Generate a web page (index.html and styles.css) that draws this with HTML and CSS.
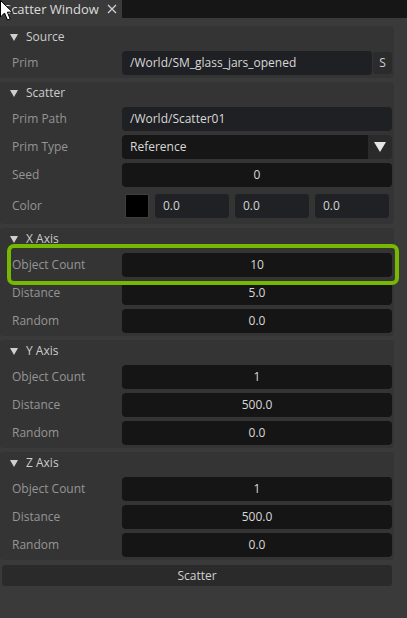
FILE: index.html
```html
<!DOCTYPE html>
<html>
<head>
<meta charset="utf-8">
<link rel="stylesheet" href="styles.css">
</head>
<body>
<div class="window">
  <div class="tabbar">
    <div class="tab">
      <span class="tab-title">Scatter Window</span>
      <svg class="tab-close" width="10" height="10" viewBox="0 0 10 10"><path d="M1 1 L9 9 M9 1 L1 9" stroke="#cfcfcf" stroke-width="1.3" fill="none"/></svg>
    </div>
  </div>
  <div class="content">
    <section class="frame">
      <div class="frame-header"><svg class="caret" width="8" height="7" viewBox="0 0 8 7"><polygon points="0,0 8,0 4,7" fill="#cfcfcf"/></svg>Source</div>
      <div class="row">
        <span class="label">Prim</span>
        <div class="field field-path">/World/SM_glass_jars_opened</div>
        <div class="btn-s">S</div>
      </div>
    </section>

    <section class="frame">
      <div class="frame-header"><svg class="caret" width="8" height="7" viewBox="0 0 8 7"><polygon points="0,0 8,0 4,7" fill="#cfcfcf"/></svg>Scatter</div>
      <div class="row">
        <span class="label">Prim Path</span>
        <div class="field field-path field-full">/World/Scatter01</div>
      </div>
      <div class="row">
        <span class="label">Prim Type</span>
        <div class="combo">
          <div class="combo-value">Reference</div>
          <div class="combo-arrow"><svg width="12" height="10" viewBox="0 0 12 10"><polygon points="0,0 12,0 6,10" fill="#e6e6e6"/></svg></div>
        </div>
      </div>
      <div class="row">
        <span class="label">Seed</span>
        <div class="field">0</div>
      </div>
      <div class="row row-color">
        <span class="label">Color</span>
        <div class="swatch"></div>
        <div class="num">0.0</div>
        <div class="num">0.0</div>
        <div class="num">0.0</div>
      </div>
    </section>

    <section class="frame">
      <div class="frame-header"><svg class="caret" width="8" height="7" viewBox="0 0 8 7"><polygon points="0,0 8,0 4,7" fill="#cfcfcf"/></svg>X Axis</div>
      <div class="row row-highlight">
        <span class="label">Object Count</span>
        <div class="field">10</div>
        <div class="ring"></div>
      </div>
      <div class="row">
        <span class="label">Distance</span>
        <div class="field">5.0</div>
      </div>
      <div class="row">
        <span class="label">Random</span>
        <div class="field">0.0</div>
      </div>
    </section>

    <section class="frame">
      <div class="frame-header"><svg class="caret" width="8" height="7" viewBox="0 0 8 7"><polygon points="0,0 8,0 4,7" fill="#cfcfcf"/></svg>Y Axis</div>
      <div class="row">
        <span class="label">Object Count</span>
        <div class="field">1</div>
      </div>
      <div class="row">
        <span class="label">Distance</span>
        <div class="field">500.0</div>
      </div>
      <div class="row">
        <span class="label">Random</span>
        <div class="field">0.0</div>
      </div>
    </section>

    <section class="frame">
      <div class="frame-header"><svg class="caret" width="8" height="7" viewBox="0 0 8 7"><polygon points="0,0 8,0 4,7" fill="#cfcfcf"/></svg>Z Axis</div>
      <div class="row">
        <span class="label">Object Count</span>
        <div class="field">1</div>
      </div>
      <div class="row">
        <span class="label">Distance</span>
        <div class="field">500.0</div>
      </div>
      <div class="row">
        <span class="label">Random</span>
        <div class="field">0.0</div>
      </div>
    </section>

    <div class="scatter-btn">Scatter</div>
  </div>
  <svg class="cursor" width="14" height="22" viewBox="0 0 14 22"><path d="M0.5 0.5 L0.5 17 L4.5 13 L7.5 20 L10.2 18.8 L7.3 12.2 L12.5 12.2 Z" fill="#ffffff" stroke="#000000" stroke-width="1" stroke-linejoin="round"/></svg>
</div>
</body>
</html>
```

FILE: styles.css
```css
html, body {
  margin: 0;
  padding: 0;
}

body {
  background: #3a3a3a;
  font-family: "Open Sans", "Noto Sans", "DejaVu Sans", sans-serif;
  font-size: 12px;
  color: #d4d4d4;
  width: 407px;
  height: 618px;
  overflow: hidden;
}

.window {
  position: relative;
  height: 618px;
}

.tabbar {
  height: 18px;
  background: #161616;
  display: flex;
}

.tab {
  width: 122px;
  height: 18px;
  background: #3a3a3a;
  display: flex;
  align-items: center;
  box-sizing: border-box;
  padding-left: 4px;
}

.tab-title {
  font-size: 13px;
  color: #dcdcdc;
  line-height: 18px;
}

.tab-close {
  margin-left: 8px;
}

.content {
  width: 394px;
  padding-top: 8px;
  display: flex;
  flex-direction: column;
}

.frame {
  background: #343434;
  border-radius: 4px;
  padding-bottom: 3px;
  margin-bottom: 4px;
  display: flex;
  flex-direction: column;
}

.frame-header {
  height: 22px;
  line-height: 22px;
  margin-bottom: 3px;
  padding-left: 10px;
  display: flex;
  align-items: center;
  color: #cdcdcd;
}

.caret {
  margin-right: 8px;
}

.row {
  display: flex;
  align-items: center;
  height: 24px;
  margin-bottom: 4px;
  padding-right: 2px;
}

.row:last-child {
  margin-bottom: 0;
}

.label {
  width: 110px;
  padding-left: 12px;
  flex: none;
  color: #959595;
  line-height: 24px;
}

.field {
  flex: 1;
  height: 24px;
  line-height: 24px;
  border-radius: 4px;
  background: #151515;
  color: #d8d8d8;
  text-align: center;
}

.field-path {
  background: #1f2023;
  text-align: left;
  padding-left: 8px;
}

.btn-s {
  width: 19px;
  height: 22px;
  line-height: 22px;
  margin-left: 1px;
  border-radius: 3px;
  background: #2b2b2b;
  color: #d0d0d0;
  text-align: center;
}

.combo {
  flex: 1;
  display: flex;
  height: 24px;
  border-radius: 4px;
  overflow: hidden;
}

.combo-value {
  flex: 1;
  background: #161616;
  line-height: 24px;
  padding-left: 8px;
  color: #d8d8d8;
}

.combo-arrow {
  width: 24px;
  background: #2a2a2a;
  display: flex;
  align-items: center;
  justify-content: center;
}

.row-color {
  margin-top: 3px;
}

.row-color:last-child {
  margin-bottom: 3px;
}

.swatch {
  width: 24px;
  height: 24px;
  box-sizing: border-box;
  margin-left: 3px;
  background: #000;
  border: 1px solid #3e3e3e;
}

.num {
  width: 74px;
  height: 24px;
  line-height: 24px;
  margin-left: 6px;
  box-sizing: border-box;
  padding-left: 8px;
  border-radius: 3px;
  background: #202124;
  color: #d4d4d4;
}

.row-highlight {
  position: relative;
}

.ring {
  position: absolute;
  left: 7px;
  top: -9px;
  width: 392px;
  height: 41px;
  box-sizing: border-box;
  border: 4px solid #76b900;
  border-radius: 7px;
}

.scatter-btn {
  margin: 1px 2px 0;
  height: 21px;
  line-height: 21px;
  border-radius: 3px;
  background: #2a2a2a;
  color: #d0d0d0;
  text-align: center;
}

.cursor {
  position: absolute;
  left: 0;
  top: 0;
}
```
